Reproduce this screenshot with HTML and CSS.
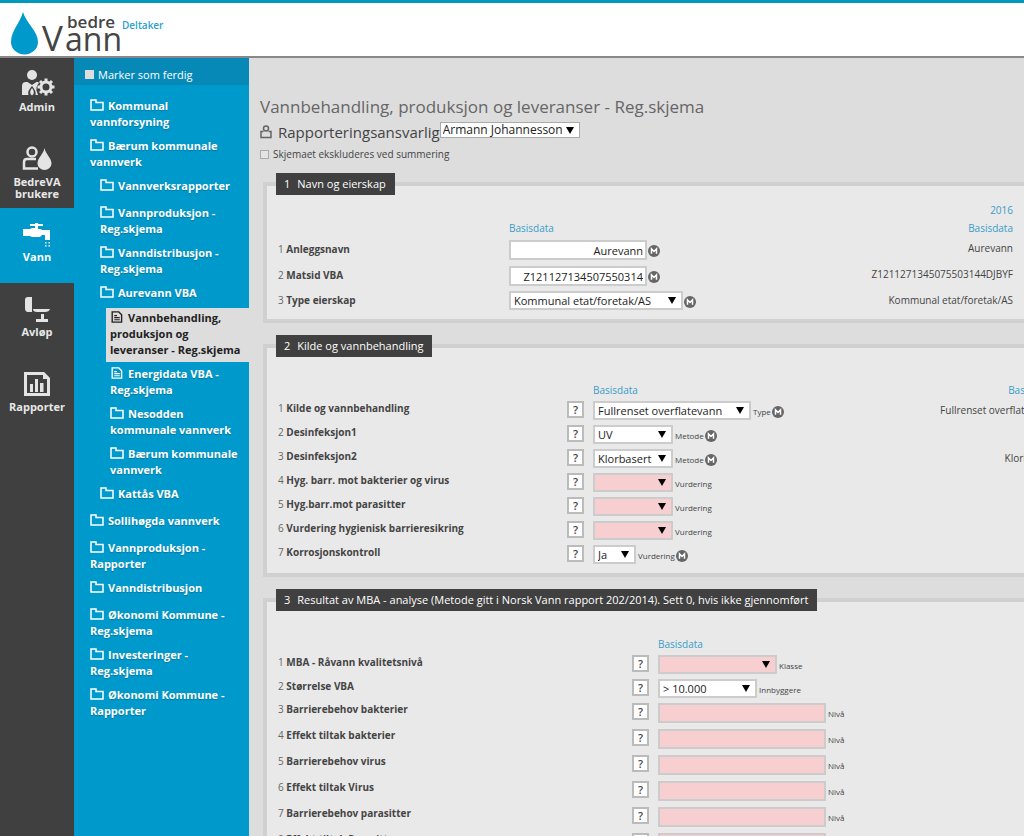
FILE: index.html
```html
<!DOCTYPE html>
<html lang="no">
<head>
<meta charset="utf-8">
<title>bedreVann</title>
<link rel="stylesheet" href="styles.css">
</head>
<body>
<svg class="defs" aria-hidden="true">
  <symbol id="folder" viewBox="0 0 14 12"><path d="M1 1h5v2.5h7V11H1z" fill="none" stroke="currentColor" stroke-width="1.5"/></symbol>
  <symbol id="doc" viewBox="0 0 14 13"><path d="M1.8 1h7.2l3 3v8H1.8z" fill="none" stroke="currentColor" stroke-width="1.5"/><path d="M4 5h3M4 7.2h6M4 9.5h6" stroke="currentColor" stroke-width="1.2"/></symbol>
  <symbol id="m" viewBox="0 0 12 12"><circle cx="6" cy="6" r="6" fill="#666"/><path d="M3.5 8.7V3.8L6 6.4l2.5-2.6v4.9" fill="none" stroke="#fff" stroke-width="1.5"/></symbol>
</svg>
<header class="top">
  <svg class="logo" width="124" height="48" viewBox="0 0 124 48" role="img" aria-label="bedreVann">
    <path d="M23 4C20 15 11 23 11 34a13 12 0 0 0 27 0C38 23 26 15 23 4z" fill="#09c"/>
    <text class="logo-small" x="67" y="20">bedre</text>
    <text class="logo-big" x="42" y="43">V</text>
    <text class="logo-mid" x="65" y="43">ann</text>
  </svg>
  <span class="role">Deltaker</span>
</header>
<div class="app">
  <nav class="rail">
    <a href="#"><svg width="36" height="28" viewBox="0 0 36 28" fill="#e4e4e4"><circle cx="13" cy="6" r="5"/><path d="M3 26v-9q0-4 4-4h1.500l4.500 3 4.500-3H19l1 1q-4 4-2 9l1 3h-2.500q1-4-3.500-9-5 5-3.500 9z"/><path d="M13 19q-4 5 0 7.500 4-2.500 0-7.500"/><circle cx="27" cy="18" r="5" fill="none" stroke="#e4e4e4" stroke-width="3"/><path d="M27 9.500v3m0 11v3M18.500 18h3m11 0h3M21 12l2 2m8 8l2 2m0-12l-2 2m-8 8l-2 2" stroke="#e4e4e4" stroke-width="3"/></svg>Admin</a>
    <a href="#"><svg width="36" height="28" viewBox="0 0 36 28"><circle cx="13" cy="8" r="4.500" fill="none" stroke="#e4e4e4" stroke-width="2.500"/><path d="M19 24.500H5V18q0-3 3-3h9" fill="none" stroke="#e4e4e4" stroke-width="2.500"/><path d="M25.500 4c-1 6-7 10-7 15.500a7 6.500 0 0 0 14 0C32.500 14 26.500 10 25.500 4z" fill="#e4e4e4"/></svg>BedreVA brukere</a>
    <a href="#" class="current"><svg width="36" height="28" viewBox="0 0 36 28" fill="#fff"><path d="M11 5h5V4h3v1h5v2h-5v3h3l1 1h8v10h-5v-5h-3l-2 2h-8l-2-1H4v-7h7l2-1h3V7h-5z"/><path d="M26 23h1.500v1.500H26zm3.500 0H31v1.500h-1.500zM26 26h1.500v1.500H26zm3.500 0H31v1.500h-1.500z"/></svg>Vann</a>
    <a href="#"><svg width="36" height="28" viewBox="0 0 36 28" fill="#e4e4e4"><path d="M9 3h4v15H9q-3 0-3-4V6q0-3 3-3zM14 15h17q-1 3-5 3h-8q-4 0-4-3zM22 20h3v5h4v3H17v-3h5z"/></svg>Avløp</a>
    <a href="#"><svg width="36" height="28" viewBox="0 0 36 28" fill="#e4e4e4"><path d="M6.500 4.500h18l5 5v16h-23z" fill="none" stroke="#e4e4e4" stroke-width="3"/><path d="M24 3l7 7h-7zM11 15h3v8h-3zm5-5h3v13h-3zm5 4h3.500v9H21z"/></svg>Rapporter</a>
  </nav>
  <aside class="side">
    <label class="done"><input type="checkbox" class="box">Marker som ferdig</label>
    <ul class="tree">
      <li><a href="#"><svg><use href="#folder"/></svg>Kommunal vannforsyning</a></li>
      <li><a href="#"><svg><use href="#folder"/></svg>Bærum kommunale vannverk</a>
        <ul>
          <li><a href="#"><svg><use href="#folder"/></svg>Vannverksrapporter</a></li>
          <li><a href="#"><svg><use href="#folder"/></svg>Vannproduksjon - Reg.skjema</a></li>
          <li><a href="#"><svg><use href="#folder"/></svg>Vanndistribusjon - Reg.skjema</a></li>
          <li><a href="#"><svg><use href="#folder"/></svg>Aurevann VBA</a>
            <ul>
              <li><a href="#" class="active"><svg><use href="#doc"/></svg>Vannbehandling, produksjon og leveranser - Reg.skjema</a></li>
              <li><a href="#"><svg><use href="#doc"/></svg>Energidata VBA - Reg.skjema</a></li>
              <li><a href="#"><svg><use href="#folder"/></svg>Nesodden kommunale vannverk</a></li>
              <li><a href="#"><svg><use href="#folder"/></svg>Bærum kommunale vannverk</a></li>
            </ul></li>
          <li><a href="#"><svg><use href="#folder"/></svg>Kattås VBA</a></li>
        </ul></li>
      <li><a href="#"><svg><use href="#folder"/></svg>Sollihøgda vannverk</a></li>
      <li><a href="#"><svg><use href="#folder"/></svg>Vannproduksjon - Rapporter</a></li>
      <li><a href="#"><svg><use href="#folder"/></svg>Vanndistribusjon</a></li>
      <li><a href="#"><svg><use href="#folder"/></svg>Økonomi Kommune - Reg.skjema</a></li>
      <li><a href="#"><svg><use href="#folder"/></svg>Investeringer - Reg.skjema</a></li>
      <li><a href="#"><svg><use href="#folder"/></svg>Økonomi Kommune - Rapporter</a></li>
    </ul>
  </aside>
  <main class="main">
    <h1>Vannbehandling, produksjon og leveranser - Reg.skjema</h1>
    <div class="owner">
      <svg width="12" height="14" viewBox="0 0 12 14" fill="none" stroke="#666" stroke-width="1.500"><circle cx="6" cy="3.500" r="2.500"/><path d="M3.500 6.500H1v6h10v-6H8.500"/></svg>
      <label for="owner">Rapporteringsansvarlig</label>
      <select id="owner" class="w140"><option>Armann Johannesson</option></select>
    </div>
    <label class="exclude"><input type="checkbox" class="box outlined">Skjemaet ekskluderes ved summering</label>
    <form>
      <fieldset>
        <legend><span>1</span>Navn og eierskap</legend>
        <table class="t1">
          <colgroup><col class="c-label"><col class="c-ctl"><col class="c-prev"><col></colgroup>
          <tr class="head"><td></td><td></td><th>2016</th><td></td></tr>
          <tr class="head"><td></td><th>Basisdata</th><th>Basisdata</th><td></td></tr>
          <tr class="tall"><td><label for="a1"><i>1</i> Anleggsnavn</label></td><td><div class="ctl"><input id="a1" class="w138" value="Aurevann"><svg class="m"><use href="#m"/></svg></div></td><td>Aurevann</td><td></td></tr>
          <tr class="tall"><td><label for="a2"><i>2</i> Matsid VBA</label></td><td><div class="ctl"><input id="a2" class="w138" value="Z121127134507550314"><svg class="m"><use href="#m"/></svg></div></td><td>Z1211271345075503144DJBYF</td><td></td></tr>
          <tr><td><label for="a3"><i>3</i> Type eierskap</label></td><td><div class="ctl"><select id="a3" class="w174"><option>Kommunal etat/foretak/AS</option></select><svg class="m"><use href="#m"/></svg></div></td><td>Kommunal etat/foretak/AS</td><td></td></tr>
        </table>
      </fieldset>
      <fieldset>
        <legend><span>2</span>Kilde og vannbehandling</legend>
        <table class="t2">
          <colgroup><col class="c-label"><col class="c-help"><col class="c-ctl"><col class="c-prev"><col></colgroup>
          <tr class="head"><td></td><td></td><td></td><td></td><td></td></tr>
          <tr class="head"><td></td><td></td><th>Basisdata</th><th>Basisdata</th><td></td></tr>
          <tr><td><label for="b1"><i>1</i> Kilde og vannbehandling</label></td><td><button type="button">?</button></td><td><div class="ctl"><select id="b1" class="w158"><option>Fullrenset overflatevann</option></select><small>Type</small><svg class="m"><use href="#m"/></svg></div></td><td>Fullrenset overflatevann</td><td></td></tr>
          <tr><td><label for="b2"><i>2</i> Desinfeksjon1</label></td><td><button type="button">?</button></td><td><div class="ctl"><select id="b2" class="w80"><option>UV</option></select><small>Metode</small><svg class="m"><use href="#m"/></svg></div></td><td></td><td></td></tr>
          <tr><td><label for="b3"><i>3</i> Desinfeksjon2</label></td><td><button type="button">?</button></td><td><div class="ctl"><select id="b3" class="w80"><option>Klorbasert</option></select><small>Metode</small><svg class="m"><use href="#m"/></svg></div></td><td>Klorbasert</td><td></td></tr>
          <tr><td><label for="b4"><i>4</i> Hyg. barr. mot bakterier og virus</label></td><td><button type="button">?</button></td><td><div class="ctl"><select id="b4" class="w80 missing"><option></option></select><small>Vurdering</small></div></td><td></td><td></td></tr>
          <tr><td><label for="b5"><i>5</i> Hyg.barr.mot parasitter</label></td><td><button type="button">?</button></td><td><div class="ctl"><select id="b5" class="w80 missing"><option></option></select><small>Vurdering</small></div></td><td></td><td></td></tr>
          <tr><td><label for="b6"><i>6</i> Vurdering hygienisk barrieresikring</label></td><td><button type="button">?</button></td><td><div class="ctl"><select id="b6" class="w80 missing"><option></option></select><small>Vurdering</small></div></td><td></td><td></td></tr>
          <tr><td><label for="b7"><i>7</i> Korrosjonskontroll</label></td><td><button type="button">?</button></td><td><div class="ctl"><select id="b7" class="w43"><option>Ja</option></select><small>Vurdering</small><svg class="m"><use href="#m"/></svg></div></td><td></td><td></td></tr>
        </table>
      </fieldset>
      <fieldset>
        <legend><span>3</span>Resultat av MBA - analyse (Metode gitt i Norsk Vann rapport 202/2014). Sett 0, hvis ikke gjennomført</legend>
        <table class="t3">
          <colgroup><col class="c-label"><col class="c-help"><col></colgroup>
          <tr class="head"><td></td><td></td><td></td></tr>
          <tr class="head"><td></td><td></td><th>Basisdata</th></tr>
          <tr><td><label for="d1"><i>1</i> MBA - Råvann kvalitetsnivå</label></td><td><button type="button">?</button></td><td><div class="ctl"><select id="d1" class="w119 missing"><option></option></select><small>Klasse</small></div></td></tr>
          <tr><td><label for="d2"><i>2</i> Størrelse VBA</label></td><td><button type="button">?</button></td><td><div class="ctl"><select id="d2" class="w99"><option>&gt; 10.000</option></select><small>Innbyggere</small></div></td></tr>
          <tr class="tall"><td><label for="d3"><i>3</i> Barrierebehov bakterier</label></td><td><button type="button">?</button></td><td><div class="ctl"><input id="d3" class="w168 missing"><small>Nivå</small></div></td></tr>
          <tr class="tall"><td><label for="d4"><i>4</i> Effekt tiltak bakterier</label></td><td><button type="button">?</button></td><td><div class="ctl"><input id="d4" class="w168 missing"><small>Nivå</small></div></td></tr>
          <tr class="tall"><td><label for="d5"><i>5</i> Barrierebehov virus</label></td><td><button type="button">?</button></td><td><div class="ctl"><input id="d5" class="w168 missing"><small>Nivå</small></div></td></tr>
          <tr class="tall"><td><label for="d6"><i>6</i> Effekt tiltak Virus</label></td><td><button type="button">?</button></td><td><div class="ctl"><input id="d6" class="w168 missing"><small>Nivå</small></div></td></tr>
          <tr class="tall"><td><label for="d7"><i>7</i> Barrierebehov parasitter</label></td><td><button type="button">?</button></td><td><div class="ctl"><input id="d7" class="w168 missing"><small>Nivå</small></div></td></tr>
          <tr class="tall"><td><label for="d8"><i>8</i> Effekt tiltak Parasitter</label></td><td><button type="button">?</button></td><td><div class="ctl"><input id="d8" class="w168 missing"><small>Nivå</small></div></td></tr>
        </table>
      </fieldset>
    </form>
  </main>
</div>
</body>
</html>
```
FILE: styles.css
```css
* { box-sizing: border-box; }
body {
  margin: 0;
  height: 100vh;
  display: flex;
  flex-direction: column;
  overflow: hidden;
  font-family: "Open Sans", "Noto Sans", sans-serif;
  color: #444;
  background: #ddd;
}
.defs { position: absolute; width: 0; height: 0; }
a { color: inherit; text-decoration: none; }

.top {
  flex: none;
  display: flex;
  align-items: flex-start;
  border-top: 3px solid #09b;
  border-bottom: 2px solid #888;
  background: #fff;
  padding-top: 5px;
}
.logo { flex: none; overflow: visible; fill: #444; }
.logo-small { font-size: 17px; font-weight: 600; }
.logo-big { font-size: 35px; }
.logo-mid { font-size: 32px; }
.role { font-size: 10px; line-height: 14px; padding-top: 10px; font-weight: 600; color: #2a9fd0; margin-left: -2px; }

.app { flex: 1; min-height: 0; display: flex; }

.rail { flex: none; width: 74px; background: #404040; }
.rail a {
  display: flex;
  flex-direction: column;
  align-items: center;
  height: 75px;
  padding-top: 11px;
  gap: 4px;
  font-size: 11px;
  line-height: 12px;
  font-weight: 700;
  text-align: center;
  color: #e8e8e8;
}
.rail a.current { background: #09c; color: #fff; }

.side { flex: none; width: 175px; background: #09c; color: #fff; }
.done {
  display: flex;
  align-items: center;
  gap: 4px;
  height: 27px;
  padding: 6px 11px 0;
  font-size: 11px;
  background: #0789b8;
}
.box {
  appearance: none;
  width: 9px;
  height: 9px;
  margin: 0;
  background: #ddd;
}
.box.outlined { border: 1px solid #aaa; background: #e4e4e4; }
.tree { margin: 0; padding: 9px 0 0; list-style: none; }
.tree ul { margin: 0; padding: 0; list-style: none; }
.tree a {
  display: block;
  min-height: 27px;
  padding: 4px 4px 4px 16px;
  font-size: 11px;
  line-height: 16px;
  font-weight: 700;
  text-shadow: 0 1px 1px #0678a0;
}
.tree ul a { padding-left: 26px; }
.tree ul ul a { padding-left: 36px; }
.tree ul ul a.active {
  margin-left: 32px;
  padding: 2px 0 4px 4px;
  background: #ddd;
  color: #222;
  text-shadow: none;
}
.tree svg { width: 14px; height: 12px; margin-right: 4px; vertical-align: -1px; }

.main { flex: 1; min-width: 0; overflow: hidden; padding: 37px 0 0 14px; }
h1 { margin: 0 0 1px -3px; font-size: 17px; line-height: 24px; font-weight: 400; color: #666; }
.owner { display: flex; align-items: center; height: 24px; margin-left: -3px; font-size: 15px; }
.owner svg { margin-right: 6px; }
.exclude {
  display: flex;
  align-items: center;
  gap: 4px;
  height: 20px;
  margin: 0 0 9px -3px;
  font-size: 10px;
}

fieldset {
  width: 900px;
  margin: 0 0 12px;
  padding: 6px 0 6px 11px;
  border: 4px solid #d0d0d0;
  background: #e9e9e9;
}
legend {
  padding: 0 9px 0 8px;
  margin-left: -2px;
  height: 22px;
  font-size: 11px;
  line-height: 22px;
  color: #fff;
  background: #404040;
}
legend span { margin-right: 7px; }
table { width: 100%; table-layout: fixed; border-collapse: collapse; font-size: 10px; }
td, th { padding: 0; vertical-align: top; line-height: 18px; }
tr { height: 24px; }
.tall { height: 26px; }
.head { height: 18px; }
th { font-weight: 400; text-align: left; color: #3a9cc8; }
td label { font-weight: 700; }
td i { font-style: normal; font-weight: 400; color: #666; }
.t1 td:first-child { padding-top: 2px; }
.t1 .tall td { padding-top: 3px; }
.t1 .c-label { width: 231px; }
.t2 .c-label { width: 289px; }
.t3 .c-label { width: 354px; }
.c-help { width: 26px; }
.t1 .c-ctl { width: 204px; }
.t1 .c-prev { width: 300px; }
.t2 .c-ctl { width: 212px; }
.t2 .c-prev { width: 248px; }
.t1 th:nth-child(3), .t1 td:nth-child(3), .t2 th:nth-child(4), .t2 td:nth-child(4) { text-align: right; }
.t1 td:nth-child(3), .t2 td:nth-child(4) { padding-top: 2px; }
.t3 .tall td { line-height: 16px; }

.ctl { display: flex; align-items: center; padding-top: 2px; }
.t1 .tall .ctl { padding-top: 0; }
.ctl small { font-size: 8px; line-height: 10px; padding: 2px 0 0 2px; }
.m { width: 12px; height: 12px; margin: 2px 0 0 1px; }
input:not([type]), select {
  height: 19px;
  padding: 0 3px;
  font-family: inherit;
  font-size: 11px;
  line-height: 14px;
  color: #222;
  border: 2px solid #ccc;
  border-radius: 0;
  background: #fff;
}
input:not([type]) { height: 20px; text-align: right; padding: 0 2px; }
select {
  appearance: none;
  background: #fff url("data:image/svg+xml,%3Csvg xmlns='http://www.w3.org/2000/svg' width='8' height='7'%3E%3Cpath d='M0 0h8L4 7z'/%3E%3C/svg%3E") no-repeat right 5px center;
}
.owner select { height: 16px; margin-bottom: 4px; padding: 0 2px; font-size: 12px; border: 1px solid #aaa; }
input.missing:not([type]), select.missing { background-color: #f8cfd0; }
button {
  display: block;
  width: 17px;
  height: 17px;
  margin-top: 2px;
  padding: 0;
  font-family: inherit;
  font-size: 11px;
  line-height: 13px;
  font-weight: 600;
  color: #444;
  border: 2px solid #bbb;
  background: #fff;
}
.w43 { width: 43px; }
.w80 { width: 80px; }
.w99 { width: 99px; }
.w119 { width: 119px; }
.w138 { width: 138px; }
.w140 { width: 140px; }
.w158 { width: 158px; }
.w168 { width: 168px; }
.w174 { width: 174px; }
```
